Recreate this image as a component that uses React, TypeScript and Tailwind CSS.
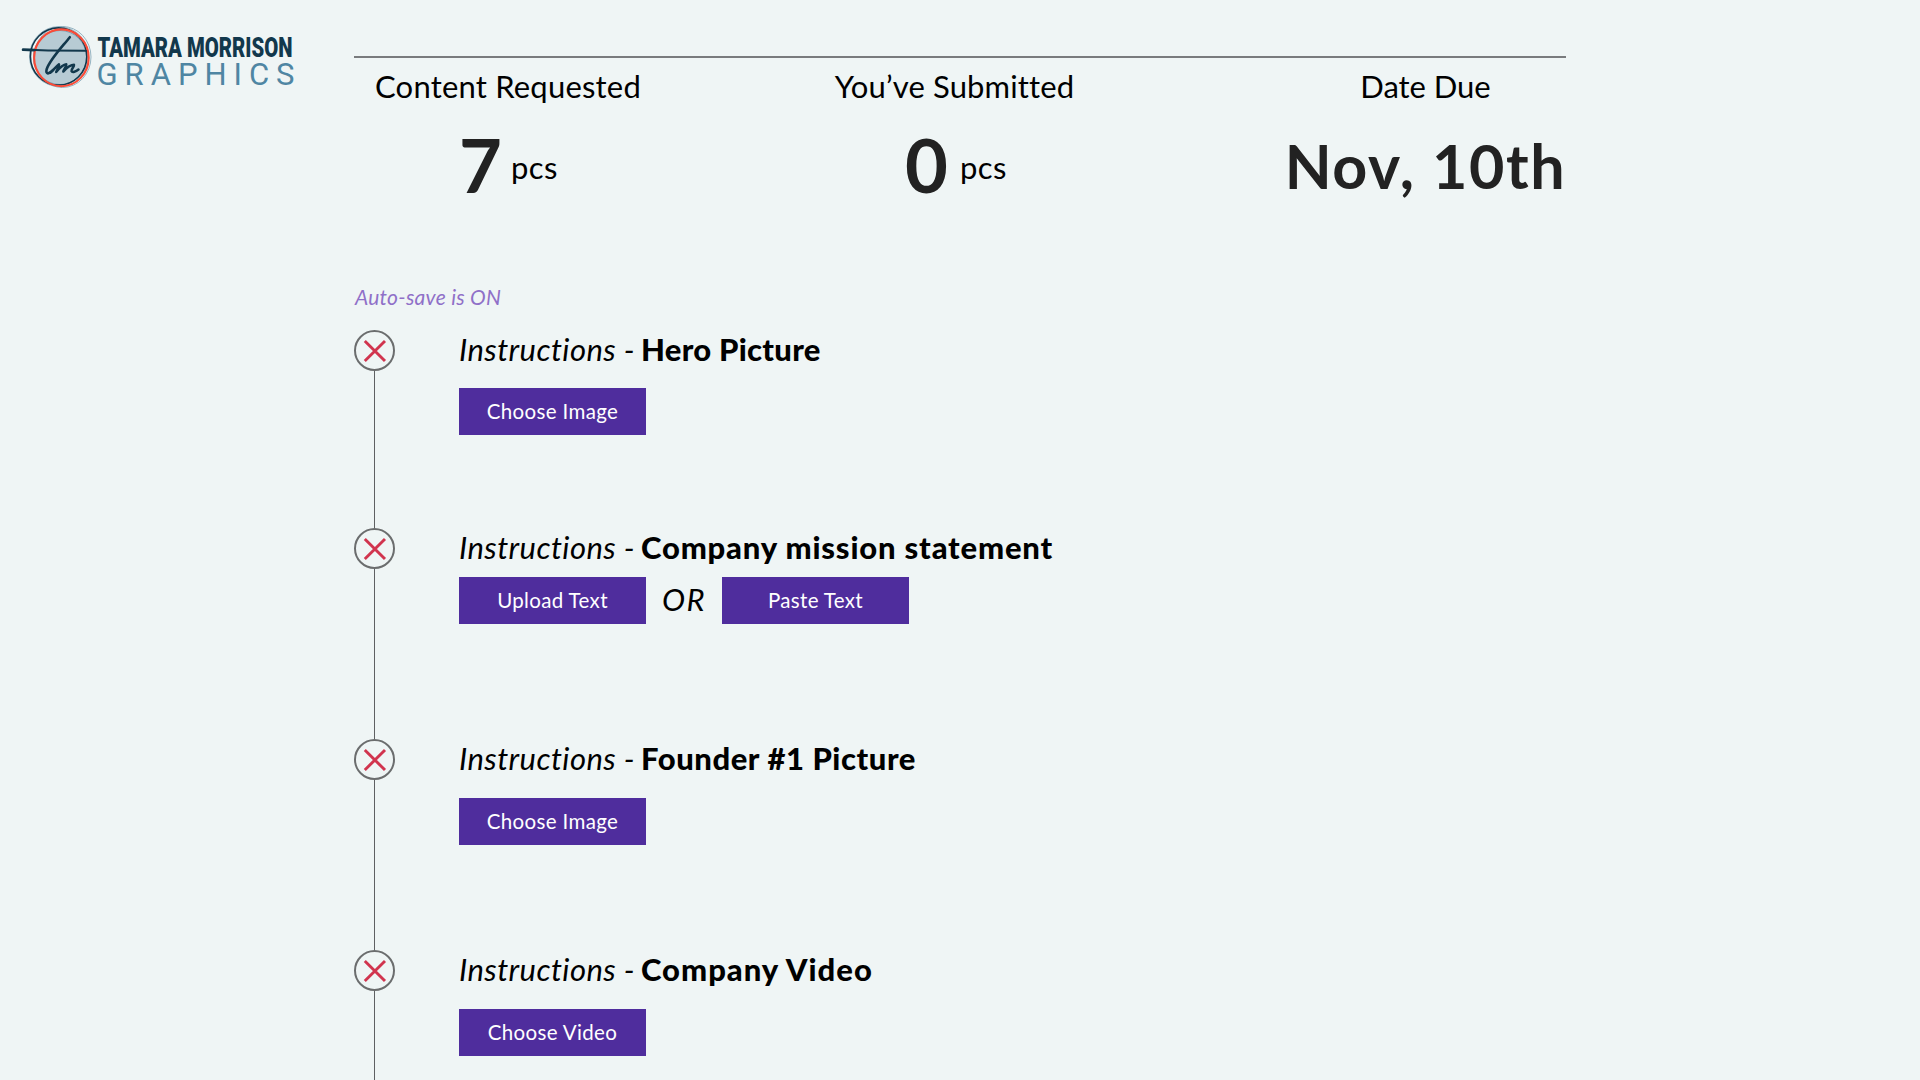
import React from "react";
import { clsx } from "clsx";

type Item = {
  name: string;
  actions: string[];
  titleClass: string;
  rowClass: string;
  actionsClass: string;
};

const items: Item[] = [
  {
    name: "Hero Picture",
    actions: ["Choose Image"],
    titleClass: "tracking-[0.27px]",
    rowClass: "h-[198px]",
    actionsClass: "mt-5",
  },
  {
    name: "Company mission statement",
    actions: ["Upload Text", "Paste Text"],
    titleClass: "tracking-[0.82px]",
    rowClass: "h-[211px]",
    actionsClass: "mt-[11px]",
  },
  {
    name: "Founder #1 Picture",
    actions: ["Choose Image"],
    titleClass: "tracking-[0.56px]",
    rowClass: "h-[211px]",
    actionsClass: "mt-[21px]",
  },
  {
    name: "Company Video",
    actions: ["Choose Video"],
    titleClass: "tracking-[1px]",
    rowClass: "h-[130px]",
    actionsClass: "mt-[21px]",
  },
];

function Logo() {
  return (
    <svg width="354" height="100" viewBox="0 0 354 100" fill="none" aria-label="Tamara Morrison Graphics">
      <circle cx="60.5" cy="57.5" r="27.5" fill="#b7cbd4" />
      <ellipse cx="59" cy="56.5" rx="29.5" ry="30" stroke="#7fa3b5" strokeWidth="0.7" />
      <ellipse cx="62.5" cy="57" rx="28.5" ry="30.5" stroke="#7fa3b5" strokeWidth="0.8" />
      <ellipse cx="60" cy="57.5" rx="26.5" ry="27" stroke="#6d94a8" strokeWidth="0.8" />
      <ellipse cx="58.6" cy="56.5" rx="28.2" ry="28.6" stroke="#12384c" strokeWidth="1.6" />
      <ellipse cx="61.4" cy="57.8" rx="27.3" ry="28.4" stroke="#fb4b37" strokeWidth="2.1" />
      {/* tm monogram */}
      <g stroke="#12384c" strokeLinecap="round" strokeLinejoin="round">
        <path d="M23 49.6 L48 50.4 L86 50.8" strokeWidth="2" />
        <path d="M23 49.8 L34 50.1" strokeWidth="2.6" />
        <path d="M69.8 37.2 C62 47 49.5 60 46.6 69.5 C45.4 74.5 49 74.5 53 70.2" strokeWidth="2.6" />
        <path
          d="M50 72.8 C53.5 70 56.5 66 59 64.2 C60 64.8 57.5 69 56.2 72 C59.5 68 63.5 64.5 66.3 64.3 C66.8 66 64 69 63.3 71.6 C67 67.6 70.5 64.8 74 64.8 C74.5 66.5 71.2 69 71.5 71 C72.2 72.8 76 71.6 78.5 69.6"
          strokeWidth="2.5"
        />
      </g>
      <text
        x="97.5"
        y="56.6"
        textLength="195"
        lengthAdjust="spacingAndGlyphs"
        fill="#12384c"
        className="font-['Roboto','Liberation_Sans',sans-serif] text-[27.5px] font-black"
      >
        TAMARA MORRISON
      </text>
      <text
        x="96.5"
        y="84.8"
        textLength="198"
        fill="#4f86a3"
        className="font-['Roboto','Liberation_Sans',sans-serif] text-[31px] font-normal"
      >
        GRAPHICS
      </text>
    </svg>
  );
}

function Stat({ label, labelClass, children }: { label: string; labelClass: string; children: React.ReactNode }) {
  return (
    <div className="flex flex-col items-center">
      <h2 className={clsx("whitespace-nowrap text-[31px] leading-[38px]", labelClass)}>{label}</h2>
      {children}
    </div>
  );
}

function Count({ value, className }: { value: number; className: string }) {
  return (
    <div className={clsx("mt-[15px] flex items-start", className)}>
      <span className="text-[74px] font-bold leading-[89px] text-[#222]">{value}</span>
      <span className="mt-7 text-[31px] leading-[38px] tracking-[0.5px]">pcs</span>
    </div>
  );
}

function StatusIcon() {
  return (
    <svg width="41" height="41" viewBox="0 0 41 41" fill="none" className="block shrink-0">
      <circle cx="20.5" cy="20.5" r="19.5" stroke="#6b6d6e" strokeWidth="2" />
      <path d="M10.8 11 L31 31 M31 11 L10.8 31" stroke="#d1344e" strokeWidth="2.9" />
    </svg>
  );
}

function Timeline() {
  return (
    <ul>
      {items.map((item) => (
        <li key={item.name} className={clsx("flex", item.rowClass)}>
          <div className="flex w-[105px] shrink-0 flex-col items-start">
            <StatusIcon />
            <div className="ml-5 w-px flex-1 bg-[#5e6062]" />
          </div>
          <div>
            <h3 className="flex whitespace-nowrap text-[31px] leading-[38px]">
              <span className="w-[182px] italic tracking-[0.42px]">Instructions -</span>
              <span className={clsx("font-black", item.titleClass)}>{item.name}</span>
            </h3>
            <div className={clsx("flex items-center", item.actionsClass)}>
              {item.actions.map((action, i) => (
                <React.Fragment key={action}>
                  {i > 0 && (
                    <span className="w-[76px] pb-[3px] pl-4 text-[31px] italic leading-[36px] tracking-[1.4px]">OR</span>
                  )}
                  <button className="h-[47px] w-[187px] bg-[#4f2d9d] pb-px text-[20.5px] leading-6 tracking-[0.35px] text-white">
                    {action}
                  </button>
                </React.Fragment>
              ))}
            </div>
          </div>
        </li>
      ))}
    </ul>
  );
}

export default function App() {
  return (
    <div className="flex h-screen overflow-hidden bg-[#eff5f5] font-['Lato','Open_Sans',sans-serif] text-black">
      <aside className="w-[354px] shrink-0">
        <Logo />
      </aside>
      <main className="w-[1212px] shrink-0 pt-14">
        <section className="grid h-[229px] grid-cols-[308px_585px_1fr] content-start border-t-2 border-[#797b7d] pt-[9px]">
          <Stat label="Content Requested" labelClass="tracking-[0.2px]">
            <Count value={7} className="gap-[9px] pl-px" />
          </Stat>
          <Stat label="You’ve Submitted" labelClass="tracking-[0.15px]">
            <Count value={0} className="gap-[12px] pl-[3px]" />
          </Stat>
          <div className="ml-auto w-[281px]">
            <Stat label="Date Due" labelClass="tracking-[-0.05px]">
              <p className="mt-6 whitespace-nowrap text-[61px] font-bold leading-[74px] tracking-[1.6px] text-[#222]">
                Nov, 10th
              </p>
            </Stat>
          </div>
        </section>
        <p className="mb-[21px] ml-px text-[21px] italic leading-6 tracking-[0.27px] text-[#8f70c8]">Auto-save is ON</p>
        <Timeline />
      </main>
    </div>
  );
}
